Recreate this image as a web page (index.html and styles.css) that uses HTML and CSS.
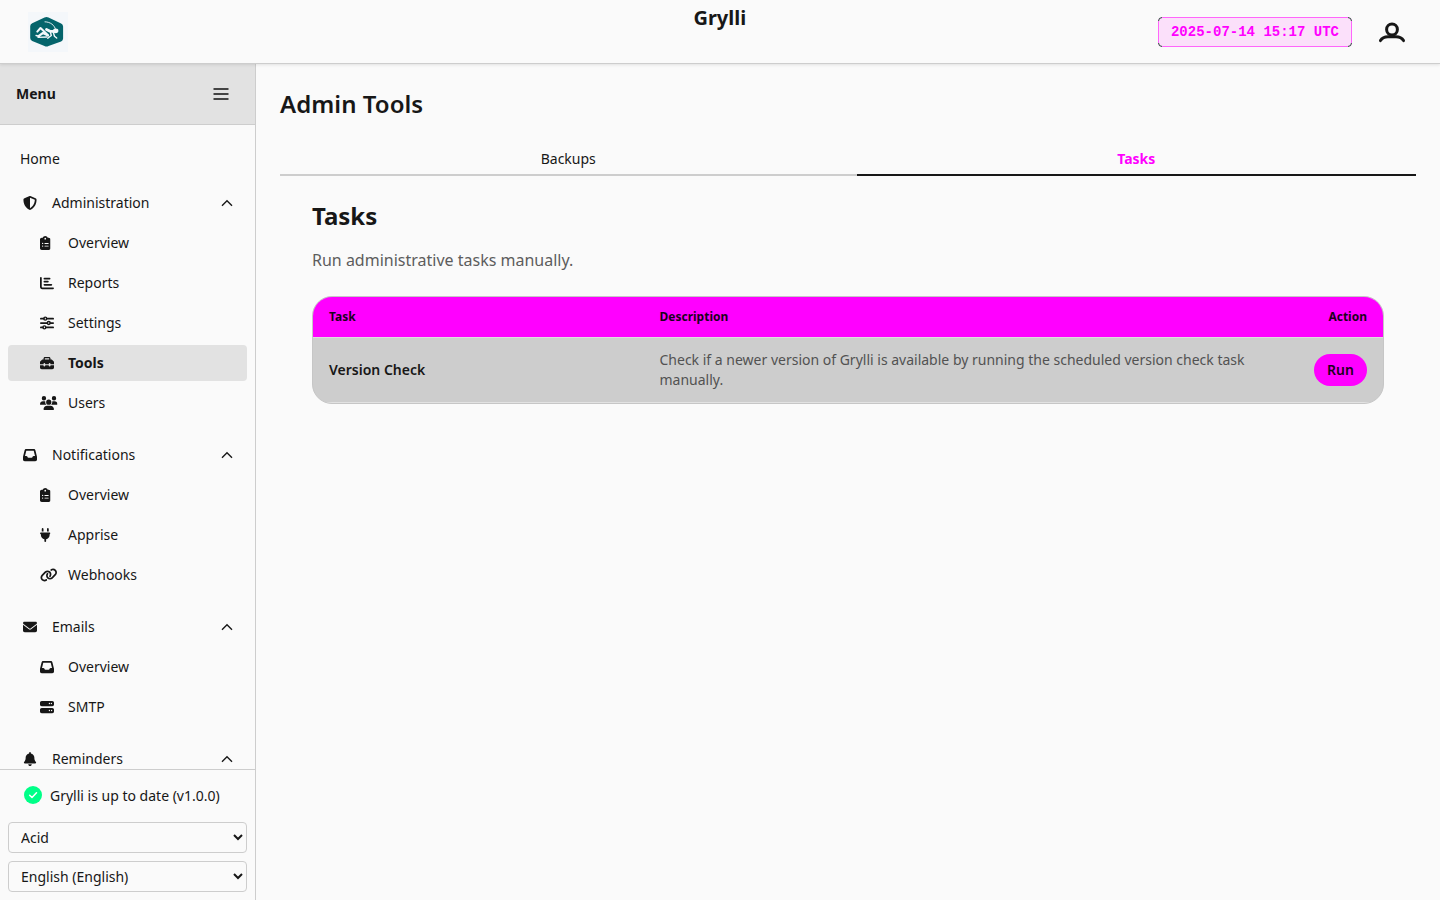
FILE: index.html
```html
<!DOCTYPE html>
<html lang="en">
<head>
<meta charset="utf-8">
<title>Grylli</title>
<link rel="stylesheet" href="styles.css">
</head>
<body>
<svg class="defs" width="0" height="0" aria-hidden="true">
  <symbol id="shield" viewBox="0 0 512 512"><path d="M256 0c4.600 0 9.200 1 13.400 2.900L457.700 82.800c22 9.300 38.400 31 38.300 57.200c-.5 99.200-41.300 280.700-213.600 363.200c-16.700 8-36.100 8-52.800 0C57.300 420.700 16.500 239.200 16 140c-.1-26.200 16.300-47.900 38.300-57.200L242.700 2.900C246.800 1 251.400 0 256 0zm0 66.800V444.800C394 378 431.100 230.100 432 141.400L256 66.800z"/></symbol>
  <symbol id="clip" viewBox="0 0 384 512"><path fill-rule="evenodd" d="M192 0c-41.800 0-77.400 26.700-90.500 64H64C28.700 64 0 92.700 0 128V448c0 35.300 28.700 64 64 64H320c35.300 0 64-28.700 64-64V128c0-35.300-28.700-64-64-64H282.500C269.400 26.700 233.800 0 192 0zm0 64a32 32 0 1 1 0 64 32 32 0 1 1 0-64zM72 272a24 24 0 1 1 48 0 24 24 0 1 1-48 0zm104-16H304c8.800 0 16 7.200 16 16s-7.200 16-16 16H176c-8.800 0-16-7.200-16-16s7.200-16 16-16zM72 368a24 24 0 1 1 48 0 24 24 0 1 1-48 0zm88 0c0-8.800 7.200-16 16-16H304c8.800 0 16 7.200 16 16s-7.200 16-16 16H176c-8.800 0-16-7.200-16-16z"/></symbol>
  <symbol id="chart" viewBox="0 0 512 512"><path d="M32 32c17.700 0 32 14.300 32 32V400c0 8.800 7.200 16 16 16H480c17.700 0 32 14.300 32 32s-14.300 32-32 32H80c-44.200 0-80-35.800-80-80V64C0 46.300 14.300 32 32 32zm96 64c0-17.700 14.300-32 32-32H352c17.700 0 32 14.300 32 32s-14.300 32-32 32H160c-17.700 0-32-14.300-32-32zm32 80H288c17.700 0 32 14.300 32 32s-14.300 32-32 32H160c-17.700 0-32-14.300-32-32s14.300-32 32-32zm0 112H416c17.700 0 32 14.300 32 32s-14.300 32-32 32H160c-17.700 0-32-14.300-32-32s14.300-32 32-32z"/></symbol>
  <symbol id="sliders" viewBox="0 0 512 512"><g fill="none" stroke="currentColor" stroke-width="64" stroke-linecap="round"><path d="M32 96h110M242 96h238M32 256h238M370 256h110M32 416h78M210 416h270"/><g stroke-width="48"><circle cx="192" cy="96" r="54"/><circle cx="320" cy="256" r="54"/><circle cx="160" cy="416" r="54"/></g></g></symbol>
  <symbol id="toolbox" viewBox="0 0 512 512"><path d="M176 88v40H336V88c0-4.400-3.600-8-8-8H184c-4.400 0-8 3.600-8 8zm-48 40V88c0-30.900 25.100-56 56-56H328c30.900 0 56 25.100 56 56v40h28.100c12.700 0 24.900 5.100 33.900 14.100l51.900 51.900c9 9 14.100 21.200 14.100 33.900V304H384V288c0-17.700-14.300-32-32-32s-32 14.300-32 32v16H192V288c0-17.700-14.300-32-32-32s-32 14.300-32 32v16H0V227.900c0-12.700 5.100-24.900 14.100-33.900l51.900-51.900c9-9 21.200-14.100 33.900-14.100H128zM0 416V336H128v16c0 17.700 14.300 32 32 32s32-14.300 32-32V336H320v16c0 17.700 14.300 32 32 32s32-14.300 32-32V336H512v80c0 35.300-28.700 64-64 64H64c-35.300 0-64-28.700-64-64z"/></symbol>
  <symbol id="users" viewBox="0 0 640 512"><path d="M144 0a80 80 0 1 1 0 160A80 80 0 1 1 144 0zM512 0a80 80 0 1 1 0 160A80 80 0 1 1 512 0zM0 298.700C0 239.800 47.800 192 106.700 192h42.700c15.900 0 31 3.500 44.600 9.700c-1.300 7.200-1.900 14.700-1.900 22.300c0 38.200 16.800 72.500 43.300 96H21.300C9.600 320 0 310.400 0 298.700zM405.300 320h-.7c26.600-23.500 43.300-57.800 43.300-96c0-7.600-.7-15-1.900-22.300c13.600-6.300 28.700-9.700 44.600-9.700h42.700C592.200 192 640 239.800 640 298.700c0 11.800-9.600 21.300-21.300 21.300H405.300zM224 224a96 96 0 1 1 192 0 96 96 0 1 1-192 0zM128 485.300C128 411.700 187.700 352 261.300 352H378.700C452.300 352 512 411.700 512 485.300c0 14.700-11.900 26.700-26.700 26.700H154.700c-14.700 0-26.700-11.900-26.700-26.700z"/></symbol>
  <symbol id="inbox" viewBox="0 0 512 512"><path d="M121 32C91.600 32 66 52 58.900 80.500L1.900 308.400C.6 313.500 0 318.700 0 323.900V416c0 35.300 28.700 64 64 64H448c35.300 0 64-28.700 64-64V323.900c0-5.200-.6-10.400-1.900-15.500l-57-227.900C446 52 420.400 32 391 32H121zm0 64H391l48 192H387.800c-12.100 0-23.200 6.800-28.600 17.700l-14.300 28.600c-5.400 10.800-16.500 17.700-28.600 17.700H195.800c-12.100 0-23.200-6.800-28.600-17.700l-14.300-28.600c-5.400-10.800-16.500-17.700-28.600-17.700H73L121 96z"/></symbol>
  <symbol id="plug" viewBox="0 0 384 512"><path d="M96 0C78.300 0 64 14.300 64 32v96h64V32c0-17.700-14.300-32-32-32zM288 0c-17.700 0-32 14.300-32 32v96h64V32c0-17.700-14.300-32-32-32zM32 160c-17.700 0-32 14.300-32 32s14.300 32 32 32v32c0 77.400 55 142 128 156.800V480c0 17.700 14.300 32 32 32s32-14.300 32-32V412.800C297 398 352 333.400 352 256V224c17.700 0 32-14.300 32-32s-14.300-32-32-32H32z"/></symbol>
  <symbol id="link" viewBox="0 0 640 512"><path d="M579.800 267.700c56.500-56.500 56.500-148 0-204.500c-50-50-128.800-56.500-186.300-15.400l-1.600 1.100c-14.400 10.300-17.700 30.300-7.400 44.600s30.300 17.700 44.600 7.400l1.600-1.100c32.100-22.900 76-19.300 103.800 8.600c31.500 31.500 31.500 82.500 0 114L422.300 334.800c-31.500 31.500-82.500 31.500-114 0c-27.900-27.900-31.500-71.800-8.600-103.800l1.100-1.600c10.300-14.400 6.900-34.400-7.400-44.600s-34.400-6.900-44.600 7.400l-1.100 1.600C206.500 251.200 213 330 263 380c56.500 56.500 148 56.500 204.500 0L579.800 267.700zM60.200 244.300c-56.500 56.500-56.500 148 0 204.500c50 50 128.800 56.500 186.300 15.400l1.600-1.100c14.400-10.300 17.700-30.300 7.400-44.600s-30.300-17.700-44.600-7.400l-1.600 1.100c-32.100 22.900-76 19.300-103.800-8.600C74 372 74 321 105.500 289.500L217.700 177.200c31.500-31.500 82.500-31.500 114 0c27.900 27.900 31.500 71.800 8.600 103.900l-1.100 1.600c-10.300 14.400-6.900 34.400 7.400 44.600s34.400 6.900 44.600-7.400l1.100-1.600C433.500 260.800 427 182 377 132c-56.500-56.500-148-56.500-204.500 0L60.200 244.300z"/></symbol>
  <symbol id="mail" viewBox="0 0 512 512"><path d="M48 64C21.500 64 0 85.500 0 112c0 15.100 7.100 29.300 19.200 38.400L236.800 313.600c11.400 8.500 27 8.500 38.400 0L492.800 150.400c12.100-9.100 19.200-23.300 19.200-38.400c0-26.500-21.500-48-48-48H48zM0 176V384c0 35.300 28.700 64 64 64H448c35.300 0 64-28.700 64-64V176L294.400 339.200c-22.800 17.100-54 17.100-76.800 0L0 176z"/></symbol>
  <symbol id="server" viewBox="0 0 512 512"><path fill-rule="evenodd" d="M64 32C28.700 32 0 60.700 0 96v64c0 35.300 28.700 64 64 64H448c35.300 0 64-28.700 64-64V96c0-35.300-28.700-64-64-64H64zm280 72a24 24 0 1 1 0 48 24 24 0 1 1 0-48zm48 24a24 24 0 1 1 48 0 24 24 0 1 1-48 0zM64 288c-35.300 0-64 28.700-64 64v64c0 35.300 28.700 64 64 64H448c35.300 0 64-28.700 64-64V352c0-35.300-28.700-64-64-64H64zm280 72a24 24 0 1 1 0 48 24 24 0 1 1 0-48zm56 24a24 24 0 1 1 48 0 24 24 0 1 1-48 0z"/></symbol>
  <symbol id="bell" viewBox="0 0 448 512"><path d="M224 0c-17.700 0-32 14.300-32 32V51.200C119 66 64 130.600 64 208v18.800c0 47-17.300 92.400-48.500 127.600l-7.400 8.300c-8.400 9.400-10.400 22.900-5.300 34.400S19.400 416 32 416H416c12.600 0 24-7.400 29.200-18.900s3.100-25-5.300-34.400l-7.400-8.300C401.300 319.200 384 273.900 384 226.800V208c0-77.400-55-142-128-156.800V32c0-17.700-14.300-32-32-32zm45.300 493.300c12-12 18.700-28.300 18.700-45.300H160c0 17 6.700 33.300 18.700 45.300s28.300 18.700 45.300 18.700s33.300-6.700 45.300-18.700z"/></symbol>
  <symbol id="up" viewBox="0 0 12 12"><path d="M1 8.700 6 3.700 11 8.700" fill="none" stroke="currentColor" stroke-width="1.400"/></symbol>
</svg>

<header class="topbar">
  <svg class="logo" viewBox="0 0 40 40"><path fill="#f4f7fa" d="M0 0h40v40H0z"/><path fill="#04646b" d="M16.500 5.400q2-1 4 0l12.600 6q2 1 2 3v12q0 2-2 3L20.500 34q-2 1-4 0L4.200 29q-2-1-2-3V14.200q0-2 2-3z"/><g fill="none" stroke="#f4f7fa" stroke-linecap="round" stroke-linejoin="round"><path stroke-width="2" d="M9.300 19.600l3.200-3.600 7.300 7"/><path stroke-width="2.200" d="M10.500 24.100l4.500-3.100 5 2.500"/><path stroke-width="1.300" d="M10 25.300l9-.3M8 23.500l3.500.8"/><path stroke-width="2.800" d="M18.500 17.500l3.500 1.700 4 .3"/><path stroke-width="1.400" d="M22.500 20.500l.8 3-3.500 2.800M25.500 21l1 3.200 2.200 1.800"/><path stroke-width=".9" d="M17 9.800c5.500.2 9.500 3.200 10.700 8"/></g><ellipse cx="27.700" cy="18.800" rx="2.700" ry="2.400" fill="#f4f7fa"/></svg>
  <h1 class="brand">Grylli</h1>
  <div class="topbar-right">
    <div class="clock">2025-07-14 15:17 UTC</div>
    <svg class="avatar" viewBox="0 0 28 22"><g fill="none" stroke="currentColor"><circle cx="14" cy="7.500" r="5.400" stroke-width="3"/><path stroke-width="3" stroke-linecap="round" d="M2.500 18.600C4 16 7 14.800 10 14.800h8c3 0 6 1.200 7.500 3.800"/></g></svg>
  </div>
</header>
<div class="shell">
  <aside class="sidebar">
    <div class="menu-head"><span>Menu</span><svg class="burger" viewBox="0 0 16 14"><path d="M.5 2h15M.5 7h15M.5 12h15" stroke="currentColor" stroke-width="1.800"/></svg></div>
    <nav class="nav">
      <a class="item home">Home</a>
      <section class="group">
        <div class="item head"><svg class="ico"><use href="#shield"/></svg><span>Administration</span><svg class="chev"><use href="#up"/></svg></div>
        <a class="item sub"><svg class="ico narrow"><use href="#clip"/></svg><span>Overview</span></a>
        <a class="item sub"><svg class="ico"><use href="#chart"/></svg><span>Reports</span></a>
        <a class="item sub"><svg class="ico"><use href="#sliders"/></svg><span>Settings</span></a>
        <a class="item sub active"><svg class="ico"><use href="#toolbox"/></svg><span>Tools</span></a>
        <a class="item sub"><svg class="ico wide"><use href="#users"/></svg><span>Users</span></a>
      </section>
      <section class="group">
        <div class="item head"><svg class="ico"><use href="#inbox"/></svg><span>Notifications</span><svg class="chev"><use href="#up"/></svg></div>
        <a class="item sub"><svg class="ico narrow"><use href="#clip"/></svg><span>Overview</span></a>
        <a class="item sub"><svg class="ico narrow"><use href="#plug"/></svg><span>Apprise</span></a>
        <a class="item sub"><svg class="ico wide"><use href="#link"/></svg><span>Webhooks</span></a>
      </section>
      <section class="group">
        <div class="item head"><svg class="ico"><use href="#mail"/></svg><span>Emails</span><svg class="chev"><use href="#up"/></svg></div>
        <a class="item sub"><svg class="ico"><use href="#inbox"/></svg><span>Overview</span></a>
        <a class="item sub"><svg class="ico"><use href="#server"/></svg><span>SMTP</span></a>
      </section>
      <section class="group">
        <div class="item head"><svg class="ico"><use href="#bell"/></svg><span>Reminders</span><svg class="chev"><use href="#up"/></svg></div>
      </section>
    </nav>
    <div class="side-foot">
      <div class="version"><svg class="check" viewBox="0 0 18 18"><circle cx="9" cy="9" r="9" fill="#00ff88"/><path d="M5.700 9.200l2.300 2.300 4.500-4.700" fill="none" stroke="#fff" stroke-width="1.500" stroke-linecap="round" stroke-linejoin="round"/></svg><span>Grylli is up to date (v1.0.0)</span></div>
      <select class="pick"><option>Acid</option></select>
      <select class="pick"><option>English (English)</option></select>
    </div>
  </aside>
  <main class="main">
    <h2 class="page-title">Admin Tools</h2>
    <div class="tabs"><a class="tab">Backups</a><a class="tab selected">Tasks</a></div>
    <div class="panel">
      <h2 class="panel-title">Tasks</h2>
      <p class="lead">Run administrative tasks manually.</p>
      <div class="table">
        <div class="row thead"><span>Task</span><span>Description</span><span class="end">Action</span></div>
        <div class="row tbody"><span class="task">Version Check</span><span class="desc">Check if a newer version of Grylli is available by running the scheduled version check task manually.</span><span class="end"><button class="run">Run</button></span></div>
      </div>
    </div>
  </main>
</div>
</body>
</html>
```

FILE: styles.css
```css
* { box-sizing: border-box; }
body {
  margin: 0;
  height: 900px;
  overflow: hidden;
  display: flex;
  flex-direction: column;
  background: #fafafa;
  color: #171717;
  font: 14px/20px "Noto Sans", sans-serif;
}
h1, h2, p { margin: 0; }
svg { display: block; flex: none; fill: currentColor; }
.defs { position: absolute; }

.topbar {
  position: relative;
  z-index: 1;
  flex: none;
  height: 64px;
  display: grid;
  grid-template-columns: 1fr auto 1fr;
  padding: 0 32px 0 28px;
  border-bottom: 1px solid #cdcdcd;
  box-shadow: 0 1px 3px rgba(0, 0, 0, .1);
}
.logo { width: 40px; height: 40px; margin-top: 12px; }
.brand { font-size: 20px; line-height: 28px; font-weight: 700; margin: 4px -1.800px 0 1.800px; }
.topbar-right { display: flex; justify-content: flex-end; align-items: flex-start; gap: 26px; }
.clock {
  position: relative;
  margin-top: 17px;
  height: 30px;
  padding: 4px 12px;
  border: 1px solid #ff66fb;
  border-radius: 4px;
  background: #fbe0fa;
  color: #f0f;
  font: 700 14px/20px "Liberation Mono", monospace;
}
/* dark ticks at the rounded corners */
.clock::after {
  content: "";
  position: absolute;
  inset: -1px;
  border: 1px solid #1c6b2c;
  border-radius: 4px;
  mask:
    linear-gradient(#000, #000) 0 0 / 4px 4px no-repeat,
    linear-gradient(#000, #000) 100% 0 / 4px 4px no-repeat,
    linear-gradient(#000, #000) 0 100% / 4px 4px no-repeat,
    linear-gradient(#000, #000) 100% 100% / 4px 4px no-repeat;
}
.avatar { width: 28px; height: 22px; margin: 22px 2px 0 0; }

.shell { flex: 1; min-height: 0; display: flex; }
.sidebar {
  width: 256px;
  flex: none;
  display: flex;
  flex-direction: column;
  border-right: 1px solid #cdcdcd;
}
.menu-head {
  flex: none;
  height: 61px;
  display: flex;
  align-items: center;
  justify-content: space-between;
  padding: 0 26px 0 16px;
  background: #e2e2e2;
  border-bottom: 1px solid #cdcdcd;
  font-weight: 700;
}
.burger { width: 16px; height: 14px; color: #444; }
.nav { flex: 1; min-height: 0; overflow: hidden; padding: 16px 8px 0; }
.item { height: 36px; display: flex; align-items: center; padding: 0 12px; border-radius: 4px; }
.home { margin-bottom: 8px; }
.group { display: flex; flex-direction: column; gap: 4px; margin-bottom: 16px; }
.head { padding: 0 14px; gap: 15px; }
.chev { width: 12px; height: 12px; margin-left: auto; }
.sub { padding-left: 32px; }
.ico { width: 14px; height: 14px; margin-left: 1px; }
.sub .ico { margin-left: 0; margin-right: 14px; }
.sub .narrow { width: 10.500px; margin-right: 17.500px; }
.sub .wide { width: 17.500px; margin-right: 10.500px; }
.active { background: #e2e2e2; font-weight: 700; }

.side-foot {
  flex: none;
  height: 131px;
  display: flex;
  flex-direction: column;
  gap: 8px;
  padding: 16px 8px 8px;
  border-top: 1px solid #cdcdcd;
}
.version { flex: 1; display: flex; align-items: flex-start; gap: 8px; padding-left: 16px; }
.check { width: 18px; height: 18px; }
.pick {
  height: 31px;
  width: 239px;
  padding: 4px 0 4px 8px;
  border: 1px solid #cdcdcd;
  border-radius: 4px;
  background: #fafafa;
  color: inherit;
  font: inherit;
}

.main { flex: 1; padding: 24px; }
.page-title, .panel-title { font-size: 24px; line-height: 32px; font-weight: 600; }
.page-title { letter-spacing: .04px; }
.tabs { display: grid; grid-template-columns: 577px 1fr; margin-top: 24px; }
.tab { height: 32px; padding: 5px .5px 0 0; text-align: center; border-bottom: 2px solid #cdcdcd; }
.selected { border-color: #171717; color: #f0f; font-weight: 700; }
.panel { padding: 24px 32px; }
.panel-title { font-weight: 700; }
.lead { margin-top: 16px; font-size: 16px; line-height: 24px; color: #5d5d5d; }
.table {
  margin-top: 24px;
  border: 1px solid #c6c6c6;
  border-radius: 20px;
  overflow: hidden;
  background: #cdcdcd;
}
.row { display: grid; grid-template-columns: 330.500px 1fr 84px; align-items: center; }
.row > span { padding-left: 16px; }
.row > .end { padding: 0 16px 0 0; text-align: right; }
.thead { height: 40px; background: #f0f; font-size: 12px; font-weight: 700; color: #1b001b; }
.tbody { height: 66px; border-top: 1px solid #dedede; border-bottom: 1px solid #e2e2e2; }
.task { font-weight: 600; }
.desc { color: #525252; }
.run {
  width: 53px;
  height: 32px;
  padding: 0;
  border: 0;
  border-radius: 16px;
  background: #f0f;
  color: #1b001b;
  font: 600 14px/20px "Noto Sans", sans-serif;
}
```
